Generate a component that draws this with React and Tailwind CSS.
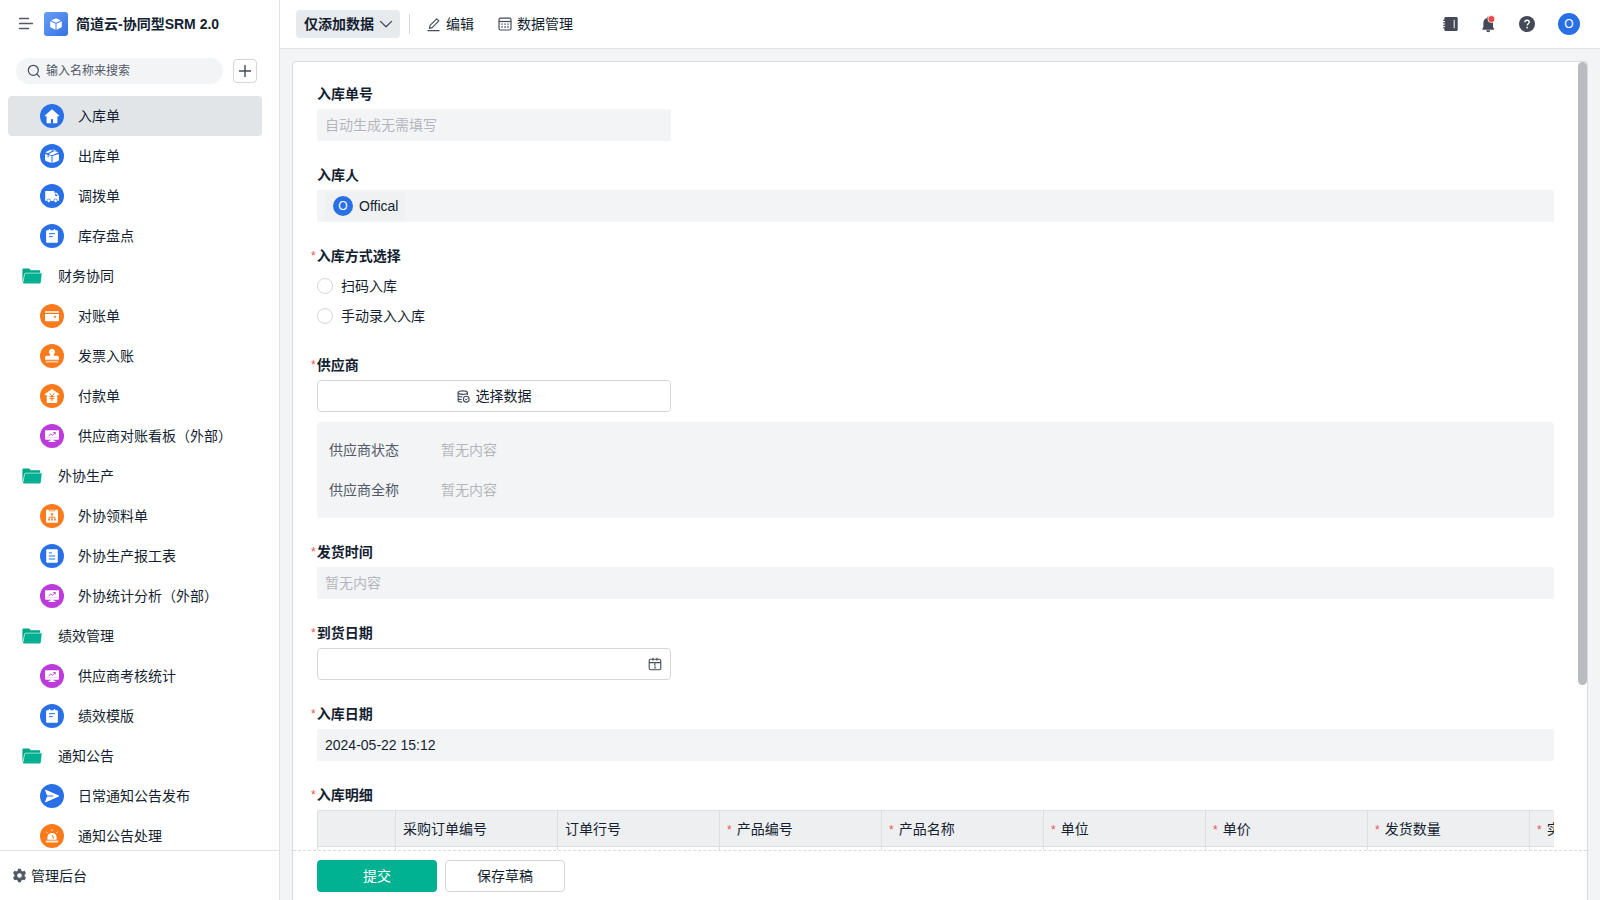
import { useState } from "react";

const NAV = [
  { label: "入库单", icon: "home", color: "blue" },
  { label: "出库单", icon: "box", color: "blue" },
  { label: "调拨单", icon: "truck", color: "blue" },
  { label: "库存盘点", icon: "note", color: "blue" },
  { label: "财务协同", folder: true },
  { label: "对账单", icon: "wallet", color: "orange" },
  { label: "发票入账", icon: "stamp", color: "orange" },
  { label: "付款单", icon: "houseYen", color: "orange" },
  { label: "供应商对账看板（外部）", icon: "board", color: "purple" },
  { label: "外协生产", folder: true },
  { label: "外协领料单", icon: "org", color: "orange" },
  { label: "外协生产报工表", icon: "doc", color: "blue" },
  { label: "外协统计分析（外部）", icon: "board", color: "purple" },
  { label: "绩效管理", folder: true },
  { label: "供应商考核统计", icon: "board", color: "purple" },
  { label: "绩效模版", icon: "note", color: "blue" },
  { label: "通知公告", folder: true },
  { label: "日常通知公告发布", icon: "send", color: "blue" },
  { label: "通知公告处理", icon: "alarm", color: "orange" },
];

const COLUMNS = [
  { label: "采购订单编号" },
  { label: "订单行号" },
  { label: "产品编号", required: true },
  { label: "产品名称", required: true },
  { label: "单位", required: true },
  { label: "单价", required: true },
  { label: "发货数量", required: true },
  { label: "实收数量", required: true },
];

const COLORS = { blue: "#2970e6", orange: "#fa7a1c", purple: "#bb3bdb" };

// white shapes on a 24px disc, c is the disc colour for the cut-outs
const GLYPHS = {
  home: (c) => (
    <>
      <path d="M12 5.2 4.9 11.4c-.3.3-.1.9.4.9h1.3v5.9c0 .6.4 1 1 1h8.800c.6 0 1-.4 1-1v-5.900h1.300c.5 0 .7-.6.4-.9z" />
      <path d="M10.900 19.400v-3.400c0-.6.4-1 1.100-1s1.100.4 1.100 1v3.400z" fill={c} />
    </>
  ),
  box: (c) => (
    <>
      <path d="M5.100 10.100l6.400 1.900v7.100l-5.700-2c-.4-.2-.7-.5-.7-1z" />
      <path d="M18.900 10.100 12.500 12v7.100l5.700-2c.4-.2.700-.5.700-1z" />
      <path d="M5.300 8.300 10.600 5.700l2.100.7L7.800 9.200zM9.200 9.700l5-2.800L18.600 8.400 12 11.200l-2.800-.6z" />
      <path d="M13.200 5.400 18.300 7.400l-3-.400-3.200-1.200z" />
      <path d="M8.100 10.800v2.700" stroke={c} strokeWidth="1" />
    </>
  ),
  truck: (c) => (
    <>
      <path d="M6.200 7h7.400c.5 0 .8.3.8.8V8.700h2c.3 0 .5.1.7.4l1.700 2.600c.1.2.2.4.2.600v3.900c0 .5-.3.800-.8.800H6c-.5 0-.8-.3-.8-.8V8c0-.6.4-1 1-1z" />
      <path d="M15.200 9.800h1l1.300 2.100h-2.300z" fill={c} />
      <circle cx="8.800" cy="16.800" r="1.800" stroke={c} strokeWidth=".7" />
      <circle cx="15.600" cy="16.800" r="1.800" stroke={c} strokeWidth=".7" />
    </>
  ),
  note: (c) => (
    <>
      <path d="M6.900 6.200h1.900V5h1.400v1.200h3.600V5h1.400v1.200h1.900c.5 0 .8.3.8.8v11c0 .5-.3.800-.8.800H6.900c-.5 0-.8-.3-.8-.800V7c0-.5.3-.8.8-.8z" />
      <path d="M9 9.700h6M9 12.600h3.600" stroke={c} strokeWidth="1" />
    </>
  ),
  wallet: (c) => (
    <>
      <path d="M6 7h12c.6 0 1 .4 1 1v1H5V8c0-.6.4-1 1-1z" opacity=".75" />
      <path d="M5 9.900h14v6.300c0 .6-.4 1-1 1H6c-.6 0-1-.4-1-1z" />
      <rect x="14" y="12" width="2" height="1.800" rx=".5" fill={c} />
    </>
  ),
  stamp: () => (
    <>
      <path d="M12 4.800a3.100 3.100 0 0 1 1.900 5.500c-.2.200-.2.500-.2.900 0 .4.300.6.700.600h2.700c1.200 0 1.900.8 1.900 1.900v2.100H5v-2.100c0-1.100.7-1.900 1.900-1.900h2.700c.4 0 .7-.2.700-.6 0-.4 0-.7-.2-.9A3.100 3.100 0 0 1 12 4.800z" />
      <rect x="5.800" y="16.800" width="12.400" height="1.700" opacity=".65" />
    </>
  ),
  houseYen: (c) => (
    <>
      <path d="M12 4.900 4.900 10c-.4.3-.2.9.3.9h1.500v7.200c0 .5.4.9.9.9h8.800c.5 0 .9-.4.9-.9v-7.200h1.500c.5 0 .7-.6.3-.9z" />
      <path d="m9.700 9.300 2.300 3 2.300-3M12 12.300V17M9.500 12.600h5M9.500 14.700h5" fill="none" stroke={c} strokeWidth="1" />
    </>
  ),
  board: (c) => (
    <>
      <path d="M6 6.200h12c.6 0 1 .4 1 1v7.600c0 .5-.4.900-1 .900H6c-.6 0-1-.4-1-.900V7.200c0-.6.4-1 1-1z" />
      <path d="M5 13.700h14" stroke={c} strokeWidth=".5" opacity=".5" />
      <path d="M10.400 15.500h3.200v1.300h1.700V18H8.700v-1.200h1.700z" />
      <path d="m8.700 12 2.100-2 1.600 1.300 2.800-2.600M13.300 8.500h2v1.800" fill="none" stroke={c} strokeWidth=".9" />
    </>
  ),
  org: (c) => (
    <>
      <path d="M6.800 5.700h10.400c.5 0 .8.300.8.800v11.500c0 .5-.3.800-.8.800H6.800c-.5 0-.8-.3-.8-.8V6.500c0-.5.3-.8.800-.8z" />
      <path d="M9.300 5v1.900h5.400V5" fill="none" stroke={c} strokeWidth=".8" />
      <path d="M12 10v5M9 15v-1.700h6V15" fill="none" stroke={c} strokeWidth=".8" />
      <path d="M11 9.200h2v1.900h-2zM8.200 14.700h1.700v1.700H8.200zM11.150 14.700h1.700v1.700h-1.700zM14.100 14.700h1.700v1.700h-1.700z" fill={c} />
    </>
  ),
  doc: (c) => (
    <>
      <rect x="6.200" y="5.200" width="11.600" height="13.600" rx="1" />
      <path d="M8.800 8.900h3.200M8.800 12h6.400M8.800 15h6.400" stroke={c} strokeWidth="1" />
    </>
  ),
  send: (c) => (
    <>
      <path d="M5.100 6.500c-.2-.5.2-.9.700-.7l13 5.700c.5.2.5.8 0 1l-13 5.700c-.5.2-.9-.2-.7-.7L7.300 12z" />
      <path d="M6.800 12h6.400" stroke={c} strokeWidth="1" />
    </>
  ),
  alarm: (c) => (
    <>
      <path d="M7.400 15.800v-2.200a4.600 4.600 0 0 1 9.200 0v2.200z" />
      <path d="M5.800 16.600h12.400v1.900H5.800z" opacity=".85" />
      <path d="M12 5.200v2M6.300 7.600l1.200 1.400M17.700 7.600l-1.200 1.400" stroke="#fff" strokeWidth="1" opacity=".8" />
      <path d="m12.200 11.600 1.600 2.800" stroke={c} strokeWidth="1.100" />
    </>
  ),
};

function DiscIcon({ name, color }) {
  const c = COLORS[color];
  return (
    <svg viewBox="0 0 24 24" className="size-6 shrink-0" fill="#fff" aria-hidden="true">
      <circle cx="12" cy="12" r="12" fill={c} />
      {GLYPHS[name](c)}
    </svg>
  );
}

function FolderIcon() {
  return (
    <svg viewBox="0 0 20 16" className="h-4 w-5 shrink-0" aria-hidden="true">
      <path d="M1.300.600h5.600c.5 0 .8.200 1 .6l.6 1.100h8.600c.6 0 1 .4 1 1v2H3.200L.4 14V1.600c0-.6.4-1 .9-1z" fill="#00a688" />
      <path d="M3.700 5.100h15.200c.6 0 .9.400.8.900l-1 8.500c-.1.600-.5 1-1.100 1H1.800c-.6 0-.9-.4-.8-.9l1.600-8.700c.1-.5.500-.8 1.100-.8z" fill="#00b090" />
      <path d="M1 14.200l1.600-8.300c.1-.5.500-.8 1.100-.8h15.600" fill="none" stroke="#b5efe2" strokeWidth=".8" />
    </svg>
  );
}

function Sidebar() {
  const [active, setActive] = useState("入库单");
  return (
    <aside className="flex w-[280px] shrink-0 flex-col border-r border-[#dfe1e5] bg-white">
      <div className="flex h-12 shrink-0 items-center pl-[18px]">
        <button aria-label="收起菜单" className="mr-[10px]">
          <svg viewBox="0 0 16 16" className="size-4" stroke="#525967" strokeWidth="1.700" strokeLinecap="round">
            <path d="M1.700 2.500h8.600M1.700 7.500h12.600M1.700 12.500h8.600" />
          </svg>
        </button>
        <svg viewBox="0 0 24 24" className="mr-2 size-6" aria-hidden="true">
          <defs>
            <linearGradient id="logo" x1="0" y1="0" x2="1" y2="1">
              <stop offset="0" stopColor="#6a9ff5" />
              <stop offset="1" stopColor="#3571e6" />
            </linearGradient>
          </defs>
          <rect width="24" height="24" rx="3" fill="url(#logo)" />
          <path d="m12 6.200 4.900 2.300L12 10.800 7.100 8.500z" fill="#fff" />
          <path d="M6.200 9.300l5.300 2.500v6l-4.700-2.300c-.4-.2-.6-.5-.6-.9zM17.800 9.300l-5.300 2.500v6l4.700-2.300c.4-.2.600-.5.600-.9z" fill="#fff" />
        </svg>
        <h1 className="text-sm font-bold">简道云-协同型SRM 2.0</h1>
      </div>
      <div className="flex items-center gap-[10px] pt-[10px] pr-[22px] pb-3 pl-4">
        <label className="flex h-[26px] min-w-0 flex-1 items-center gap-1 rounded-full bg-[#f3f4f6] pl-[10px]">
          <svg viewBox="0 0 16 16" className="size-4 shrink-0" fill="none" stroke="#444b59" strokeWidth="1.200" strokeLinecap="round">
            <circle cx="7.300" cy="7.300" r="5" />
            <path d="m11 11.200 2.500 2.700" />
          </svg>
          <input
            type="text"
            aria-label="搜索"
            placeholder="输入名称来搜索"
            className="min-w-0 flex-1 bg-transparent text-xs outline-none placeholder:text-[#525967]"
          />
        </label>
        <button aria-label="新建" className="flex size-6 items-center justify-center rounded border border-[#d3d6db]">
          <svg viewBox="0 0 14 14" className="size-[14px]" stroke="#444b59" strokeWidth="1.400">
            <path d="M7 1v12M1 7h12" />
          </svg>
        </button>
      </div>
      <nav className="min-h-0 flex-1 overflow-hidden pr-[17px] pl-2">
        {NAV.map((item) => (
          <a
            key={item.label}
            href="#"
            onClick={() => setActive(item.label)}
            className={`flex h-10 items-center rounded text-sm ${
              item.folder ? "gap-4 pl-[14px]" : "gap-[14px] pl-8"
            } ${active === item.label ? "bg-[#e1e5e8]" : ""}`}
          >
            {item.folder ? <FolderIcon /> : <DiscIcon name={item.icon} color={item.color} />}
            {item.label}
          </a>
        ))}
      </nav>
      <div className="flex h-[50px] shrink-0 items-center border-t border-[#e1e3e7] pl-3">
        <button className="flex items-center gap-1 text-sm">
          <svg viewBox="0 0 16 16" className="size-[15px]" fill="#525967" fillRule="evenodd">
            <path d="M6.500.8h3l.5 2 1.400.8 2-.6 1.500 2.600-1.500 1.500v1.800l1.500 1.500-1.500 2.600-2-.6-1.400.8-.5 2h-3l-.5-2-1.400-.8-2 .6-1.500-2.600 1.500-1.500V7.100L1.100 5.600 2.600 3l2 .6L6 2.800zM8 5.500a2.500 2.500 0 1 0 0 5 2.500 2.500 0 0 0 0-5z" />
          </svg>
          管理后台
        </button>
      </div>
    </aside>
  );
}

function Header() {
  return (
    <header className="flex h-[49px] shrink-0 items-center border-b border-[#e1e3e7] bg-white pr-5 pl-4 text-sm">
      <div className="relative">
        <select aria-label="数据权限" className="h-7 w-[104px] appearance-none rounded bg-[#e7eaed] pl-2 font-bold outline-none">
          <option>仅添加数据</option>
          <option>查看全部数据</option>
        </select>
        <svg viewBox="0 0 14 14" className="pointer-events-none absolute top-[7px] right-[7px] size-[14px]" fill="none" stroke="#444b59" strokeWidth="1.300" strokeLinecap="round">
          <path d="m1.400 4.400 5.600 5.400 5.600-5.400" />
        </svg>
      </div>
      <span className="ml-[9px] h-5 w-px bg-[#d3d6db]" />
      <button className="ml-4 flex items-center gap-[5px]">
        <svg viewBox="0 0 16 16" className="size-[15px]" fill="none" stroke="#444b59" strokeWidth="1.200" strokeLinejoin="round" strokeLinecap="round">
          <path d="M3.600 12.200l.7-3.200 7.100-7.100 2.300 2.300-7.100 7.100zM2 14.500h12" />
        </svg>
        编辑
      </button>
      <button className="ml-6 flex items-center gap-[5px]">
        <svg viewBox="0 0 14 14" className="size-[14px]" fill="none" stroke="#444b59" strokeWidth="1.200">
          <rect x="1" y="1.200" width="12" height="11.800" rx="1.500" />
          <path d="M1 4.500h12" />
          <path d="M3.300 7.200h7.600M3.300 10h7.600" strokeDasharray="1.400 1.600" strokeWidth="1.300" />
        </svg>
        数据管理
      </button>
      <div className="ml-auto flex items-center gap-[22px]">
        <button aria-label="通讯录">
          <svg viewBox="0 0 16 16" className="size-4" fill="#434956">
            <path d="M2.800.9h10.400c.9 0 1.500.6 1.500 1.500v11.200c0 .9-.6 1.500-1.500 1.500H2.800c-.9 0-1.500-.6-1.500-1.500V2.400c0-.9.600-1.500 1.500-1.500z" />
            <path d="M0 4.300h2.500M0 6.800h2.500M0 9.300h2.500M0 11.800h2.500" stroke="#434956" strokeWidth="1" />
            <path d="M1.200 5.550h.9M1.200 8.050h.9M1.200 10.550h.9M11.200 3.800v8.400" stroke="#fff" strokeWidth="1" />
          </svg>
        </button>
        <button aria-label="消息">
          <svg viewBox="0 0 16 16" className="size-4 overflow-visible" fill="#434956">
            <path d="M7.200 .6c.6 0 .9.300.9.900v.4c2.300.4 3.900 2.200 3.900 4.700v4.200l1.100 2.500c.1.300 0 .5-.3.500H1.600c-.3 0-.4-.2-.3-.5l1.100-2.500V6.600c0-2.500 1.600-4.300 3.900-4.700v-.4c0-.6.300-.9.900-.9zM5.200 14.300h4a2 2 0 0 1-4 0z" />
            <circle cx="10.400" cy="3" r="3.500" fill="#ef4444" stroke="#fff" strokeWidth=".8" />
          </svg>
        </button>
        <button aria-label="帮助" className="mr-px">
          <svg viewBox="0 0 16 16" className="size-4" fill="none">
            <circle cx="8" cy="8" r="8" fill="#434956" />
            <path d="M5.800 6.300c0-1.300 1-2.100 2.300-2.100s2.200.8 2.200 1.900c0 1.600-2.200 1.700-2.200 3.400" stroke="#fff" strokeWidth="1.400" />
            <circle cx="8.100" cy="11.600" r=".9" fill="#fff" />
          </svg>
        </button>
        <button className="flex size-[22px] items-center justify-center rounded-full bg-[#2970e6] text-xs text-white">O</button>
      </div>
    </header>
  );
}

function Star() {
  return <span className="text-xs font-normal text-[#ef5350]">*</span>;
}

function Field({ label, required, htmlFor, children }) {
  return (
    <div className="mb-6">
      <label htmlFor={htmlFor} className={`mb-[5px] flex h-5 items-center text-sm font-bold ${required ? "-ml-[6px] gap-px" : ""}`}>
        {required && <Star />}
        {label}
      </label>
      {children}
    </div>
  );
}

const filled = "block h-8 w-full rounded-xs bg-[#f3f4f6] px-2 text-sm outline-none placeholder:text-[#b3b7bd]";

function EntryForm() {
  return (
    <form className="px-6 pt-[22px] pr-[33px]">
      <Field label="入库单号" htmlFor="no">
        <input id="no" disabled placeholder="自动生成无需填写" className={`${filled} max-w-[354px]`} />
      </Field>
      <Field label="入库人">
        <div className="flex h-8 items-center rounded-xs bg-[#f3f4f6] px-2">
          <span className="flex h-7 items-center gap-[6px] rounded bg-[#f0f1f3] px-2 text-sm">
            <span className="flex size-5 items-center justify-center rounded-full bg-[#2970e6] text-xs text-white">O</span>
            Offical
          </span>
        </div>
      </Field>
      <Field label="入库方式选择" required>
        {["扫码入库", "手动录入入库"].map((t) => (
          <label key={t} className="flex h-[30px] items-center gap-2 text-sm">
            <input type="radio" name="mode" className="size-4 appearance-none rounded-full border border-[#d3d6db] bg-white checked:border-4 checked:border-[#00b192]" />
            {t}
          </label>
        ))}
      </Field>
      <Field label="供应商" required htmlFor="supplier">
        <button id="supplier" type="button" className="flex h-8 w-full max-w-[354px] items-center justify-center gap-[6px] rounded border border-[#d3d6db] text-sm">
          <svg viewBox="0 0 14 14" className="size-[13px]" fill="none" stroke="#444b59" strokeWidth="1.200">
            <ellipse cx="6.200" cy="2.800" rx="5" ry="1.900" />
            <path d="M1.200 2.800v8.400c0 1 1.800 1.800 4.400 1.900M11.200 2.800v2.600M1.200 5.700c0 1 2 1.700 4.600 1.700M1.200 8.500c0 1 1.500 1.700 3.800 1.800" />
            <circle cx="10" cy="9.900" r="3.100" />
            <path d="m8.600 9.900 1.100 1 1.700-1.900" strokeWidth="1" />
          </svg>
          选择数据
        </button>
        <dl className="mt-[10px] grid grid-cols-[112px_1fr] rounded bg-[#f3f4f6] px-3 py-2 text-sm leading-10">
          <dt className="text-[#525967]">供应商状态</dt>
          <dd className="text-[#b3b7bd]">暂无内容</dd>
          <dt className="text-[#525967]">供应商全称</dt>
          <dd className="text-[#b3b7bd]">暂无内容</dd>
        </dl>
      </Field>
      <Field label="发货时间" required htmlFor="shipped">
        <input id="shipped" disabled placeholder="暂无内容" className={filled} />
      </Field>
      <Field label="到货日期" required htmlFor="arrived">
        <div className="flex h-8 max-w-[354px] items-center rounded border border-[#d3d6db] pr-2">
          <input id="arrived" className="min-w-0 flex-1 px-2 text-sm outline-none" />
          <svg viewBox="0 0 14 14" className="size-[14px] shrink-0" fill="none" stroke="#444b59" strokeWidth="1.100">
            <rect x="1.200" y="2.200" width="11.600" height="10.600" rx="1.500" />
            <path d="M1.200 5.600h11.600M5 .800v3M9 .800v3" />
            <path d="M7 6v5M5.800 11h2.400M6 7.400h1" strokeWidth="1" opacity=".8" />
          </svg>
        </div>
      </Field>
      <Field label="入库日期" required htmlFor="stored">
        <input id="stored" readOnly defaultValue="2024-05-22 15:12" className={filled} />
      </Field>
      <Field label="入库明细" required>
        <div className="overflow-hidden rounded-t-xs">
          <table className="w-max table-fixed border-collapse text-sm">
            <thead>
              <tr className="h-9 bg-[#edeff1]">
                <th className="w-[78px] min-w-[78px] border border-[#dcdfe2]" />
                {COLUMNS.map((col) => (
                  <th key={col.label} className="w-[162px] min-w-[162px] border border-[#dcdfe2] px-[7px] text-left font-normal">
                    {col.required && (
                      <span className="mr-[5px] inline-block">
                        <Star />
                      </span>
                    )}
                    {col.label}
                  </th>
                ))}
              </tr>
            </thead>
            <tbody>
              <tr className="h-10">
                <td className="border border-[#dcdfe2]" />
                {COLUMNS.map((col) => (
                  <td key={col.label} className="border border-[#dcdfe2]" />
                ))}
              </tr>
            </tbody>
          </table>
        </div>
      </Field>
    </form>
  );
}

export default function App() {
  return (
    <div className="flex h-screen overflow-hidden bg-[#f3f4f6] font-['Liberation_Sans','Noto_Sans_CJK_SC',sans-serif] text-[#141e31]">
      <Sidebar />
      <div className="flex min-w-0 flex-1 flex-col">
        <Header />
        <main className="flex min-h-0 flex-1 flex-col px-3 pt-3">
          <div className="relative flex min-h-0 flex-1 flex-col rounded-t border border-b-0 border-[#d9dcdf] bg-white">
            <div className="relative min-h-0 flex-1">
              <div className="h-full overflow-y-auto [scrollbar-width:none]">
                <EntryForm />
              </div>
              <div className="absolute top-0 right-0 h-[79%] w-[9px] rounded-full bg-[#b9bbbe]" />
            </div>
            <div className="flex h-[50px] shrink-0 items-center gap-2 border-t border-dashed border-[#d9dcdf] px-6 text-sm">
              <button className="h-8 w-[120px] rounded bg-[#00b192] text-white">提交</button>
              <button className="h-8 w-[120px] rounded border border-[#d3d6db]">保存草稿</button>
            </div>
          </div>
        </main>
      </div>
    </div>
  );
}
